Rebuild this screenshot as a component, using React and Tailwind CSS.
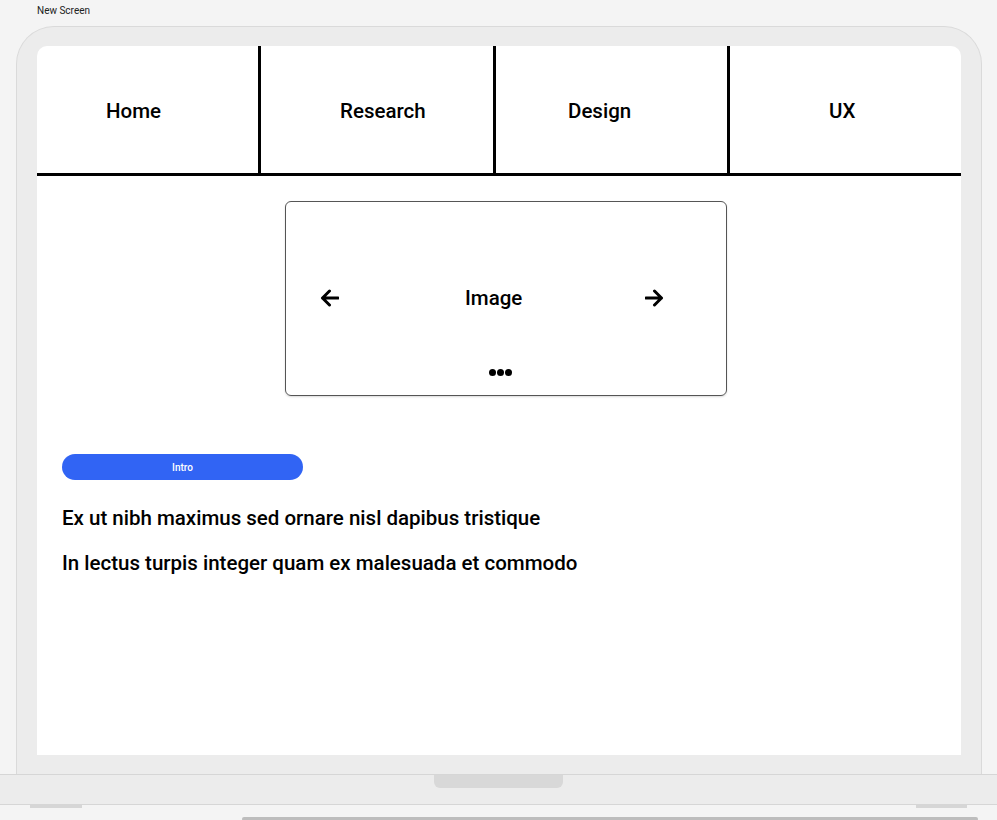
const tabs = [
  { label: 'Home', pad: 'pl-[69px]' },
  { label: 'Research', pad: 'pl-[79px]' },
  { label: 'Design', pad: 'pl-[72px]' },
  { label: 'UX', pad: 'pl-[99px]' },
];

function Arrow({ dir }) {
  const d = dir === 'left' ? 'M18 9H2.5 M9.5 2L2.5 9l7 7' : 'M1 9h15.5 M9.5 2l7 7-7 7';
  return (
    <svg width="19" height="18" viewBox="0 0 19 18" fill="none" className="shrink-0">
      <path d={d} stroke="#000" strokeWidth="3" strokeLinecap="round" strokeLinejoin="round" />
    </svg>
  );
}

export default function App() {
  return (
    <div className="relative h-[820px] w-[997px] overflow-hidden bg-[#f4f4f4] font-['Roboto',sans-serif] text-black">
      <div className="h-[26px] pl-[37px] pt-[5px] text-[10px] leading-[12px] text-[#222]">New Screen</div>

      {/* laptop lid */}
      <div className="ml-[16px] h-[748px] w-[966px] rounded-t-[38px] border border-b-0 border-[#dadada] bg-[#ececec] pl-[20px] pt-[19px]">
        <div className="flex h-[709px] w-[924px] flex-col rounded-t-[10px] bg-white">
          <nav className="flex h-[130px] border-b-[3px] border-black">
            {tabs.map((t, i) => (
              <div
                key={t.label}
                className={`flex items-center pt-[4px] text-[20.5px] font-medium ${t.pad} ${i === 0 ? 'w-[224px]' : i === 3 ? 'flex-1' : i === 1 ? 'w-[235px]' : 'w-[234px]'} ${i < 3 ? 'border-r-[3px] border-black' : ''}`}
              >
                {t.label}
              </div>
            ))}
          </nav>

          <div className="ml-[248px] mt-[25px] flex h-[195px] w-[442px] flex-col rounded-[6px] border border-[#555] shadow-[0_1px_2px_rgba(0,0,0,0.15)]">
            <div className="mt-[82px] flex h-[28px] items-center pl-[34px]">
              <Arrow dir="left" />
              <span className="ml-[126px] text-[20.5px] font-medium leading-[24px]">Image</span>
              <span className="ml-[123px]"><Arrow dir="right" /></span>
            </div>
            <div className="ml-[203px] mt-[57px] flex gap-[1.5px]">
              <span className="h-[7px] w-[6.5px] rounded-full bg-black" />
              <span className="h-[7px] w-[6.5px] rounded-full bg-black" />
              <span className="h-[7px] w-[6.5px] rounded-full bg-black" />
            </div>
          </div>

          <button className="ml-[25px] mt-[58px] flex h-[26px] w-[241px] items-center justify-center rounded-full bg-[#3164f4] text-[10px] font-medium text-white">
            Intro
          </button>

          <p className="ml-[25px] mt-[26px] text-[20.5px] font-medium leading-[24px]">Ex ut nibh maximus sed ornare nisl dapibus tristique</p>
          <p className="ml-[25px] mt-[21px] text-[20.5px] font-medium leading-[24px]">In lectus turpis integer quam ex malesuada et commodo</p>
        </div>
      </div>

      {/* laptop base */}
      <div className="flex h-[31px] w-full justify-center border-y border-[#d6d6d6] bg-[#ececec]">
        <div className="h-[13px] w-[129px] rounded-b-[6px] bg-[#d8d8d8]" />
      </div>
      <div className="flex h-[3px] justify-between pl-[30px] pr-[30px]">
        <div className="h-[3px] w-[52px] bg-[#d6d6d6]" />
        <div className="h-[3px] w-[51px] bg-[#d6d6d6]" />
      </div>
      <div className="ml-[242px] mt-[9px] h-[4px] w-[736px] rounded-full bg-[#bdbdbd]" />
    </div>
  );
}
